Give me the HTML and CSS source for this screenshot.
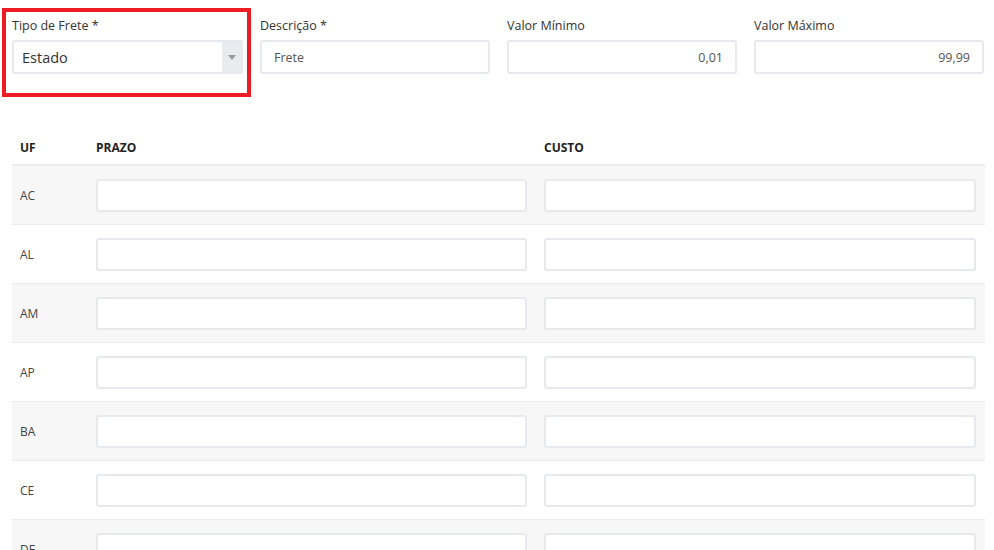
FILE: index.html
```html
<!DOCTYPE html>
<html lang="pt-BR">
<head>
<meta charset="utf-8">
<title>Frete</title>
<link rel="stylesheet" href="styles.css">
</head>
<body>
<div class="page">
  <div class="form-row">
    <div class="field">
      <label class="label">Tipo de Frete *</label>
      <div class="select">
        <span class="select-value">Estado</span>
        <span class="select-arrow"><span class="tri"></span></span>
      </div>
    </div>
    <div class="field">
      <label class="label">Descrição *</label>
      <div class="input">Frete</div>
    </div>
    <div class="field">
      <label class="label">Valor Mínimo</label>
      <div class="input right">0,01</div>
    </div>
    <div class="field">
      <label class="label">Valor Máximo</label>
      <div class="input right">99,99</div>
    </div>
  </div>
  <div class="highlight"></div>

  <table class="grid">
    <colgroup>
      <col class="c-uf"><col class="c-prazo"><col class="c-custo">
    </colgroup>
    <thead>
      <tr><th>UF</th><th>PRAZO</th><th>CUSTO</th></tr>
    </thead>
    <tbody>
      <tr><td>AC</td><td><div class="cell-input"></div></td><td><div class="cell-input"></div></td></tr>
      <tr><td>AL</td><td><div class="cell-input"></div></td><td><div class="cell-input"></div></td></tr>
      <tr><td>AM</td><td><div class="cell-input"></div></td><td><div class="cell-input"></div></td></tr>
      <tr><td>AP</td><td><div class="cell-input"></div></td><td><div class="cell-input"></div></td></tr>
      <tr><td>BA</td><td><div class="cell-input"></div></td><td><div class="cell-input"></div></td></tr>
      <tr><td>CE</td><td><div class="cell-input"></div></td><td><div class="cell-input"></div></td></tr>
      <tr><td>DF</td><td><div class="cell-input"></div></td><td><div class="cell-input"></div></td></tr>
    </tbody>
  </table>
</div>
</body>
</html>
```

FILE: styles.css
```css
html, body {
  margin: 0;
  padding: 0;
  background: #fff;
  overflow: hidden;
}
body {
  font-family: "Open Sans", "Liberation Sans", sans-serif;
  color: #333;
  font-size: 13px;
}
.page {
  position: relative;
  padding: 18px 9px 0 12px;
}
.form-row {
  display: grid;
  grid-template-columns: 231px 230px 230px 230px;
  column-gap: 17px;
}
.field {
  display: flex;
  flex-direction: column;
}
.label {
  font-size: 12.5px;
  line-height: 16px;
  color: #333;
  margin-bottom: 6px;
}
.input {
  box-sizing: border-box;
  height: 34px;
  border: 2px solid #e6e9ed;
  border-radius: 3px;
  padding: 1px 12px 0;
  font-size: 12.5px;
  line-height: 29px;
  color: #555;
}
.input.right {
  text-align: right;
}
.select {
  box-sizing: border-box;
  height: 34px;
  border: 2px solid #e6e9ed;
  border-radius: 3px;
  display: flex;
  background: #fff;
}
.select-value {
  flex: 1;
  padding: 1px 0 0 8px;
  font-size: 14.5px;
  line-height: 29px;
  color: #333;
}
.select-arrow {
  width: 19px;
  background: #e9ecef;
  display: flex;
  align-items: center;
  justify-content: center;
}
.tri {
  width: 0;
  height: 0;
  border-left: 4px solid transparent;
  border-right: 4px solid transparent;
  border-top: 5px solid #9a9a9a;
}
.highlight {
  position: absolute;
  left: 2px;
  top: 8px;
  width: 241px;
  height: 81px;
  border: 4px solid #ed1c24;
}
.grid {
  margin-top: 58px;
  width: 973px;
  border-collapse: collapse;
  table-layout: fixed;
}
.c-uf { width: 76px; }
.c-prazo { width: 448px; }
.c-custo { width: 449px; }
.grid th {
  text-align: left;
  font-weight: 700;
  font-size: 12px;
  line-height: 17px;
  padding: 7px 8px 8px;
  color: #222;
  border-bottom: 2px solid #e9ecef;
}
.grid td {
  padding: 13px 9px 12px 8px;
  border-top: 1px solid #e9ecef;
  font-size: 12px;
  color: #444;
  vertical-align: middle;
}
.grid tbody tr:nth-child(odd) td {
  background: #f7f7f7;
}
.cell-input {
  box-sizing: border-box;
  height: 33px;
  border: 2px solid #e6e9ed;
  border-radius: 3px;
  background: #fff;
}
```
